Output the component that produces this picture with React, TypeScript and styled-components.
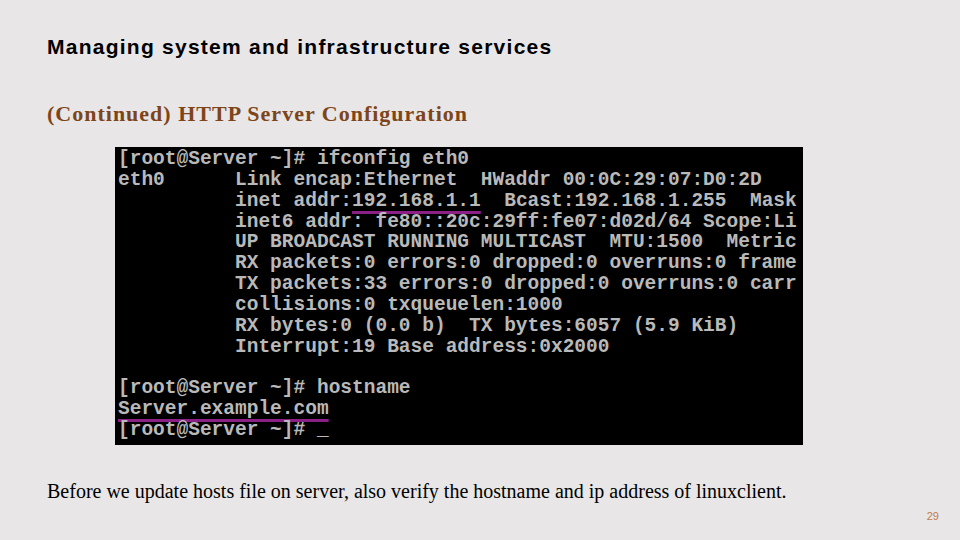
import React from "react";
import styled, { createGlobalStyle } from "styled-components";

const Global = createGlobalStyle`
  html, body { margin: 0; padding: 0; background: #e8e6e6; }
  #root { width: 960px; height: 540px; }
`;

const Slide = styled.div`
  width: 960px;
  height: 540px;
  box-sizing: border-box;
  background: #e8e6e6;
  padding: 34px 0 0 47px;
  display: flex;
  flex-direction: column;
  position: relative;
  overflow: hidden;
`;

const Title = styled.h1`
  margin: 0;
  font-family: "Liberation Sans", Arial, sans-serif;
  font-weight: 700;
  font-size: 21px;
  letter-spacing: 1.25px;
  line-height: 26px;
  color: #000;
`;

const Subtitle = styled.h2`
  margin: 41px 0 0 0;
  font-family: "Liberation Serif", "Times New Roman", serif;
  font-weight: 700;
  font-size: 22px;
  letter-spacing: 1px;
  line-height: 26px;
  color: #7d4519;
`;

const Terminal = styled.div`
  margin: 20px 0 0 68px;
  width: 688px;
  height: 298px;
  box-sizing: border-box;
  background: #000;
  padding: 2px 0 0 3px;
  overflow: hidden;
`;

const Line = styled.div`
  font-family: "Liberation Mono", "DejaVu Sans Mono", monospace;
  font-weight: 700;
  font-size: 19.5px;
  line-height: 20.85px;
  height: 20.85px;
  color: #b9b9b9;
  white-space: pre;
`;

const Mark = styled.span`
  text-decoration: underline;
  text-decoration-color: #8a1f86;
  text-decoration-thickness: 3px;
  text-underline-offset: 5px;
`;

const Note = styled.p`
  margin: 35px 0 0 0;
  font-family: "Liberation Serif", "Times New Roman", serif;
  font-size: 20px;
  line-height: 22px;
  color: #000;
`;

const PageNum = styled.div`
  position: absolute;
  right: 21px;
  bottom: 18px;
  font-family: "Liberation Sans", Arial, sans-serif;
  font-size: 11px;
  color: #c57a4a;
`;

export default function App() {
  return (
    <>
      <Global />
      <Slide>
        <Title>Managing system and infrastructure services</Title>
        <Subtitle>(Continued) HTTP Server Configuration</Subtitle>
        <Terminal>
          <Line>[root@Server ~]# ifconfig eth0</Line>
          <Line>eth0      Link encap:Ethernet  HWaddr 00:0C:29:07:D0:2D</Line>
          <Line>
            {"          inet addr:"}
            <Mark>192.168.1.1</Mark>
            {"  Bcast:192.168.1.255  Mask"}
          </Line>
          <Line>          inet6 addr: fe80::20c:29ff:fe07:d02d/64 Scope:Li</Line>
          <Line>          UP BROADCAST RUNNING MULTICAST  MTU:1500  Metric</Line>
          <Line>          RX packets:0 errors:0 dropped:0 overruns:0 frame</Line>
          <Line>          TX packets:33 errors:0 dropped:0 overruns:0 carr</Line>
          <Line>          collisions:0 txqueuelen:1000</Line>
          <Line>          RX bytes:0 (0.0 b)  TX bytes:6057 (5.9 KiB)</Line>
          <Line>          Interrupt:19 Base address:0x2000</Line>
          <Line> </Line>
          <Line>[root@Server ~]# hostname</Line>
          <Line>
            <Mark>Server.example.com</Mark>
          </Line>
          <Line>[root@Server ~]# _</Line>
        </Terminal>
        <Note>
          Before we update hosts file on server, also verify the hostname and ip address of linuxclient.
        </Note>
        <PageNum>29</PageNum>
      </Slide>
    </>
  );
}
